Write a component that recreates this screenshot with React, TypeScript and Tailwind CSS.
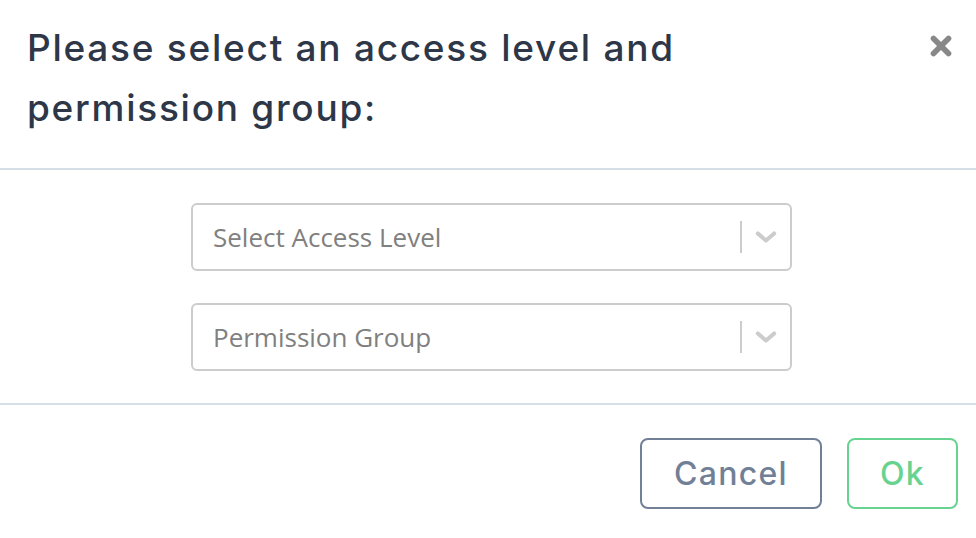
import { X } from "lucide-react";

function SelectBox({ placeholder }: { placeholder: string }) {
  return (
    <div className="flex h-[68px] w-[601px] items-center rounded-[6px] border-2 border-[#cccccc] bg-white">
      <span className="flex-1 pl-[20px] text-[26px] text-[#808080] [font-family:'Open_Sans',sans-serif]">
        {placeholder}
      </span>
      <span className="h-[32px] w-[2px] bg-[#cccccc]" />
      <span className="flex w-[48px] items-center justify-center">
        <svg width="28" height="28" viewBox="0 0 24 24" fill="none" stroke="#cccccc" strokeWidth="3.5" strokeLinecap="round" strokeLinejoin="round">
          <path d="M5 9l7 6 7-6" />
        </svg>
      </span>
    </div>
  );
}

export default function App() {
  return (
    <div className="h-[538px] w-[976px] bg-white [font-family:Inter,sans-serif]">
      <div className="flex items-start justify-between border-b-2 border-[#d4dfe8] pl-[27px] pr-[20px] pt-[18px] pb-[30px]">
        <h1 className="text-[37px] font-medium leading-[60px] tracking-[0.047em] text-[#2d3748]">
          Please select an access level and
          <br />
          permission group:
        </h1>
        <X className="mt-[13px] h-[30px] w-[30px] text-[#888888]" strokeWidth={4.5} />
      </div>
      <div className="flex flex-col items-center gap-[32px] border-b-2 border-[#d4dfe8] pt-[33px] pb-[32px] pl-[7px]">
        <SelectBox placeholder="Select Access Level" />
        <SelectBox placeholder="Permission Group" />
      </div>
      <div className="flex justify-end gap-[25px] pt-[33px] pr-[18px]">
        <button className="h-[71px] w-[182px] rounded-[8px] border-2 border-[#718096] text-[32px] font-medium tracking-[0.04em] text-[#718096]">
          Cancel
        </button>
        <button className="h-[71px] w-[111px] rounded-[8px] border-2 border-[#68d391] text-[32px] font-medium tracking-[0.04em] text-[#68d391]">
          Ok
        </button>
      </div>
    </div>
  );
}
